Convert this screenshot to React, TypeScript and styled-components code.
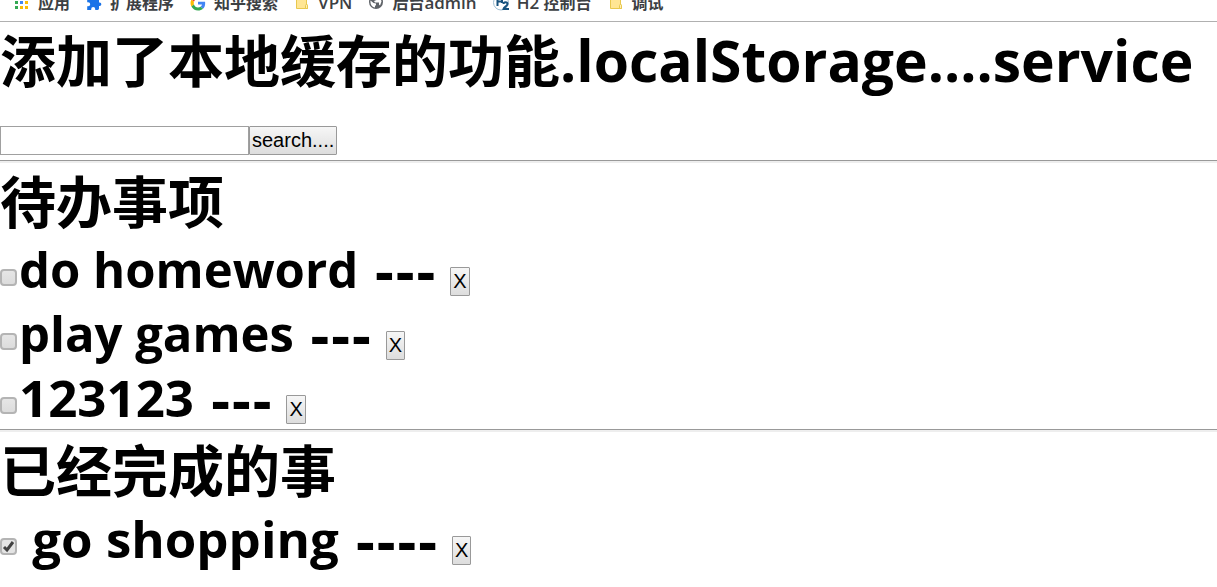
import React, { useState } from "react";
import styled, { createGlobalStyle } from "styled-components";

const GlobalStyle = createGlobalStyle`
  *, *::before, *::after { box-sizing: border-box; }
  body {
    margin: 0;
    background: #fff;
    color: #000;
    font-family: "Open Sans", "Noto Sans CJK SC", sans-serif;
  }
`;

const BookmarkBar = styled.nav`
  display: flex;
  align-items: flex-end;
  gap: 16px;
  height: 22px;
  padding-left: 14px;
  overflow: hidden;
  border-bottom: 1px solid #b0b0b0;
`;

const Bookmark = styled.a`
  display: flex;
  flex: none;
  align-items: center;
  gap: 8px;
  height: 36px;
  color: #3c4043;
  font-size: 16px;
  font-weight: 600;
  line-height: 24px;
  text-decoration: none;
  white-space: nowrap;

  svg { flex: none; }
`;

const Latin = styled.span<{ $size: number }>`
  font-size: ${(p) => p.$size}px;
  line-height: 1;
`;

const Title = styled.h1`
  margin: 0;
  padding-top: 2px;
  font-size: 56px;
  font-weight: 700;
  line-height: 72px;
  white-space: nowrap;
`;

const SectionTitle = styled(Title).attrs({ as: "h2" })``;

const SearchForm = styled.form`
  display: flex;
  margin-top: 30px;
`;

const SearchInput = styled.input`
  width: 249px;
  height: 29px;
  padding: 2px;
  border: 1px solid #a0a0a0;
  border-radius: 0;
  background: #fff;
  font: 20px "Liberation Sans", sans-serif;
`;

const Button = styled.button`
  flex: none;
  height: 29px;
  padding: 0 2px;
  border: 1px solid #999;
  border-radius: 1px;
  background: linear-gradient(#f6f6f6, #dddddd);
  color: #000;
  font: 20px "Liberation Sans", sans-serif;
`;

const Divider = styled.hr`
  height: 3px;
  margin: 0;
  border: 0;
  border-top: 1px solid #999;
  background: #eee;
`;

const Search = styled.section`
  padding-bottom: 5px;
`;

const List = styled.ul`
  margin: 0;
  padding: 0;
  list-style: none;
`;

const Row = styled.li`
  display: flex;
  align-items: center;
  height: 64px;

  ${Button} { margin: 24px 0 0 14px; }
`;

const Check = styled.input`
  appearance: none;
  flex: none;
  width: 17px;
  height: 17px;
  margin: 17px 2px 0 0;
  border: 2px solid #b4b4b4;
  border-radius: 4px;
  background: linear-gradient(#e6e6e6, #dcdcdc);

  &:checked {
    background: url("data:image/svg+xml,%3Csvg xmlns='http://www.w3.org/2000/svg' viewBox='0 0 13 13'%3E%3Cpath d='M2 7l3 3 6-8' fill='none' stroke='%23424242' stroke-width='3'/%3E%3C/svg%3E") center / 13px 13px no-repeat, #e4e4e4;
  }
`;

const TaskName = styled.label<{ $size: number }>`
  font-size: ${(p) => p.$size}px;
  font-weight: 700;
  line-height: 64px;
  white-space: pre;
`;

const Dashes = styled.span`
  margin-left: 3px;
  font-family: "DejaVu Sans", sans-serif;
  font-size: 50px;
  font-weight: 700;
  line-height: 1;
  vertical-align: -3px;
`;

const AppsIcon = () => (
  <svg width="16" height="16" viewBox="0 0 16 16" aria-hidden="true">
    {["#ea4335", "#ea4335", "#fbbc05", "#34a853", "#4285f4", "#fbbc05", "#34a853", "#fbbc05", "#fbbc05"].map((fill, i) => (
      <rect key={i} x={1 + (i % 3) * 5} y={1 + Math.floor(i / 3) * 5} width="3" height="3" fill={fill} />
    ))}
  </svg>
);

const PuzzleIcon = () => (
  <svg width="16" height="16" viewBox="0 0 16 16" aria-hidden="true">
    <path fill="#1a73e8" d="M13 7.5V4.8c0-.8-.6-1.4-1.4-1.4H9V2.5a1.8 1.8 0 0 0-3.6 0v.9H2.6c-.8 0-1.4.6-1.4 1.4v2.4h1a2 2 0 0 1 0 4h-1V15h4v-1a2 2 0 0 1 4 0v1h2.4c.8 0 1.4-.6 1.4-1.4V11h.6a1.75 1.75 0 0 0 0-3.5z" />
  </svg>
);

const GoogleIcon = () => (
  <svg width="16" height="16" viewBox="0 0 48 48" aria-hidden="true">
    <path fill="#ea4335" d="M24 11c3.500 0 6.600 1.200 9 3.600l6.700-6.700C35.600 4 30.200 1.800 24 1.800 15.300 1.800 7.800 6.800 4.200 14l7.800 6C13.800 14.800 18.500 11 24 11z" />
    <path fill="#4285f4" d="M45.500 24.500c0-1.600-.1-3-.4-4.500H24v8.800h12.100c-.5 2.900-2.100 5.200-4.500 6.800l7.500 5.800c4.300-4 6.400-9.900 6.400-16.900z" />
    <path fill="#fbbc05" d="M12 28.500a13.500 13.500 0 0 1 0-8.500l-7.800-6a22 22 0 0 0 0 20.500z" />
    <path fill="#34a853" d="M24 46.500c6.100 0 11.300-2 15.100-5.500l-7.500-5.800c-2 1.400-4.600 2.300-7.600 2.300-5.600 0-10.300-3.800-12-9l-7.800 6C7.800 41.600 15.300 46.500 24 46.500z" />
  </svg>
);

const FolderIcon = () => (
  <svg width="16" height="16" viewBox="0 0 16 16" aria-hidden="true">
    <path fill="#ffe694" stroke="#e8c84e" d="M2.500 1.500h10v8.500h1v3.500h-11z" />
    <path fill="#fff0b5" stroke="#e8c84e" d="M11.500 13.500v-3a1 1 0 0 1 2 0v3z" />
  </svg>
);

const GlobeIcon = () => (
  <svg width="16" height="16" viewBox="0 0 16 16" aria-hidden="true">
    <circle cx="8" cy="7" r="7" fill="#5f6368" />
    <path fill="#fff" d="M2.500 5.500l3 2.500 2.500.5v1.500l-1 1v1.500c-3-.5-5-3-4.500-7zM9 1.500l3.500 1.500 1 3.500-1.500 4-1-1V7.500H7L6 6l2.500-1L10 3.500z" />
  </svg>
);

const H2Icon = () => (
  <svg width="16" height="16" viewBox="0 0 16 16" aria-hidden="true">
    <circle cx="8" cy="7.500" r="7.500" fill="#fff" stroke="#9dbdd2" />
    <path d="M4.500 2v9M9 2v6M4.500 6.500h4.500" fill="none" stroke="#17527e" strokeWidth="2" />
    <path d="M10.500 9c0-2.500 4-2.500 4 0 0 2-3.500 3-4 5h5.500" fill="none" stroke="#17527e" strokeWidth="2" />
  </svg>
);

const bookmarks = [
  { name: "应用", Icon: AppsIcon },
  { name: "扩展程序", Icon: PuzzleIcon },
  { name: "知乎搜索", Icon: GoogleIcon },
  { name: "VPN", Icon: FolderIcon },
  { name: "后台admin", Icon: GlobeIcon },
  { name: "H2 控制台", Icon: H2Icon },
  { name: "调试", Icon: FolderIcon },
];

// Wraps the Latin runs of a mixed-script text so they can carry their own size.
const Mixed = ({ text, size }: { text: string; size: number }) => (
  <span>
    {text.split(/([\x20-\x7e]+)/).map((run, i) =>
      i % 2 ? <Latin key={i} $size={size}>{run}</Latin> : run
    )}
  </span>
);

type Task = { id: string; text: string; dashes: string; size: number; done: boolean };

const initialTasks: Task[] = [
  { id: "homework", text: "do homeword ", dashes: "---", size: 49, done: false },
  { id: "games", text: "play games ", dashes: "---", size: 49, done: false },
  { id: "numbers", text: "123123 ", dashes: "---", size: 51, done: false },
  { id: "shopping", text: " go shopping ", dashes: "----", size: 51, done: true },
];

export default function App() {
  const [tasks, setTasks] = useState(initialTasks);
  const [query, setQuery] = useState("");

  const toggle = (id: string) =>
    setTasks(tasks.map((t) => (t.id === id ? { ...t, done: !t.done } : t)));
  const remove = (id: string) => setTasks(tasks.filter((t) => t.id !== id));

  const renderList = (done: boolean) => (
    <List>
      {tasks
        .filter((t) => t.done === done)
        .map((t) => (
          <Row key={t.id}>
            <Check id={t.id} type="checkbox" checked={t.done} onChange={() => toggle(t.id)} />
            <TaskName htmlFor={t.id} $size={t.size}>
              {t.text}
              <Dashes>{t.dashes}</Dashes>
            </TaskName>
            <Button type="button" onClick={() => remove(t.id)}>X</Button>
          </Row>
        ))}
    </List>
  );

  return (
    <>
      <GlobalStyle />
      <BookmarkBar>
        {bookmarks.map(({ name, Icon }) => (
          <Bookmark key={name} href="#">
            <Icon />
            <Mixed text={name} size={17} />
          </Bookmark>
        ))}
      </BookmarkBar>
      <main>
        <Search>
          <Title>
            <Mixed text="添加了本地缓存的功能.localStorage....service" size={57} />
          </Title>
          <SearchForm onSubmit={(e) => e.preventDefault()}>
            <SearchInput aria-label="search" value={query} onChange={(e) => setQuery(e.target.value)} />
            <Button type="submit">search....</Button>
          </SearchForm>
        </Search>
        <Divider />
        <SectionTitle>待办事项</SectionTitle>
        {renderList(false)}
        <Divider />
        <SectionTitle>已经完成的事</SectionTitle>
        {renderList(true)}
      </main>
    </>
  );
}
